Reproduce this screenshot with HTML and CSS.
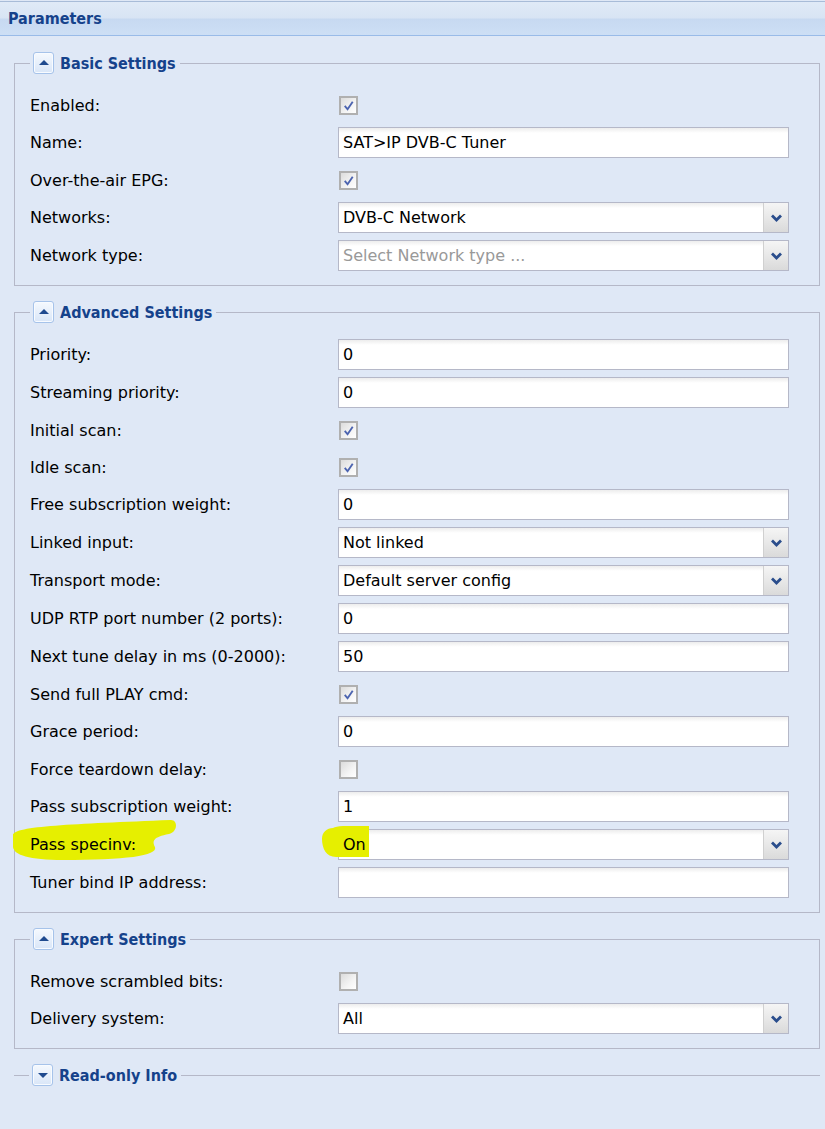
FILE: index.html
```html
<!DOCTYPE html>
<html>
<head>
<meta charset="utf-8">
<title>Parameters</title>
<link rel="stylesheet" href="styles.css">
</head>
<body>
<div class="panel">
  <div class="panel-header"><span class="panel-title">Parameters</span></div>
  <div class="panel-body">

    <fieldset class="group">
      <legend><span class="legend-inner"><span class="tool tool-up"></span><span class="legend-text">Basic Settings</span></span></legend>
      <div class="row check-row"><span class="label">Enabled:</span><span class="checkbox checked"><svg viewBox="0 0 16 16"><path d="M4 8.5 L7 12 L12.5 4"/></svg></span></div>
      <div class="row"><span class="label">Name:</span><span class="field"><span class="value">SAT&gt;IP DVB-C Tuner</span></span></div>
      <div class="row check-row"><span class="label">Over-the-air EPG:</span><span class="checkbox checked"><svg viewBox="0 0 16 16"><path d="M4 8.5 L7 12 L12.5 4"/></svg></span></div>
      <div class="row"><span class="label">Networks:</span><span class="field combo"><span class="value">DVB-C Network</span><span class="trigger"><svg viewBox="0 0 12 8"><path d="M1.5 1.5 L6 6 L10.5 1.5"/></svg></span></span></div>
      <div class="row"><span class="label">Network type:</span><span class="field combo"><span class="value placeholder">Select Network type ...</span><span class="trigger"><svg viewBox="0 0 12 8"><path d="M1.5 1.5 L6 6 L10.5 1.5"/></svg></span></span></div>
    </fieldset>

    <fieldset class="group">
      <legend><span class="legend-inner"><span class="tool tool-up"></span><span class="legend-text">Advanced Settings</span></span></legend>
      <div class="row"><span class="label">Priority:</span><span class="field"><span class="value">0</span></span></div>
      <div class="row"><span class="label">Streaming priority:</span><span class="field"><span class="value">0</span></span></div>
      <div class="row check-row"><span class="label">Initial scan:</span><span class="checkbox checked"><svg viewBox="0 0 16 16"><path d="M4 8.5 L7 12 L12.5 4"/></svg></span></div>
      <div class="row check-row"><span class="label">Idle scan:</span><span class="checkbox checked"><svg viewBox="0 0 16 16"><path d="M4 8.5 L7 12 L12.5 4"/></svg></span></div>
      <div class="row"><span class="label">Free subscription weight:</span><span class="field"><span class="value">0</span></span></div>
      <div class="row"><span class="label">Linked input:</span><span class="field combo"><span class="value">Not linked</span><span class="trigger"><svg viewBox="0 0 12 8"><path d="M1.5 1.5 L6 6 L10.5 1.5"/></svg></span></span></div>
      <div class="row"><span class="label">Transport mode:</span><span class="field combo"><span class="value">Default server config</span><span class="trigger"><svg viewBox="0 0 12 8"><path d="M1.5 1.5 L6 6 L10.5 1.5"/></svg></span></span></div>
      <div class="row"><span class="label">UDP RTP port number (2 ports):</span><span class="field"><span class="value">0</span></span></div>
      <div class="row"><span class="label">Next tune delay in ms (0-2000):</span><span class="field"><span class="value">50</span></span></div>
      <div class="row check-row"><span class="label">Send full PLAY cmd:</span><span class="checkbox checked"><svg viewBox="0 0 16 16"><path d="M4 8.5 L7 12 L12.5 4"/></svg></span></div>
      <div class="row"><span class="label">Grace period:</span><span class="field"><span class="value">0</span></span></div>
      <div class="row check-row"><span class="label">Force teardown delay:</span><span class="checkbox"></span></div>
      <div class="row"><span class="label">Pass subscription weight:</span><span class="field"><span class="value">1</span></span></div>
      <div class="row marked">
        <span class="label">Pass specinv:</span><span class="field combo"><span class="value">On</span><span class="trigger"><svg viewBox="0 0 12 8"><path d="M1.5 1.5 L6 6 L10.5 1.5"/></svg></span></span>
        <svg class="marker" viewBox="0 0 380 44" width="380" height="44"><path d="M0 15 C1 6 60 4 158 0 C165 0 165 12 156 14 C140 17 139 21 142 27 C145 36 112 40 50 40 C16 40 1 35 0 27 Z"/><path d="M320 8 C314 8 309 12 309 19 C309 28 313 37 323 37 L356 37 L356 6 L330 6 C325 6 322 7 320 8 Z"/></svg>
      </div>
      <div class="row"><span class="label">Tuner bind IP address:</span><span class="field"></span></div>
    </fieldset>

    <fieldset class="group">
      <legend><span class="legend-inner"><span class="tool tool-up"></span><span class="legend-text">Expert Settings</span></span></legend>
      <div class="row check-row"><span class="label">Remove scrambled bits:</span><span class="checkbox"></span></div>
      <div class="row"><span class="label">Delivery system:</span><span class="field combo"><span class="value">All</span><span class="trigger"><svg viewBox="0 0 12 8"><path d="M1.5 1.5 L6 6 L10.5 1.5"/></svg></span></span></div>
    </fieldset>

    <fieldset class="group collapsed">
      <legend><span class="legend-inner"><span class="tool tool-down"></span><span class="legend-text">Read-only Info</span></span></legend>
    </fieldset>

  </div>
</div>
</body>
</html>
```
FILE: styles.css
```css
html, body {
  margin: 0;
  padding: 0;
  background: #dfe8f6;
}
body {
  font-family: "DejaVu Sans", "Liberation Sans", sans-serif;
  font-size: 16px;
  color: #000;
}
.panel {
  width: 825px;
  min-height: 1129px;
  background: #dfe8f6;
  padding-top: 1px;
  box-sizing: border-box;
}
.panel-header {
  height: 33px;
  border-top: 1px solid #a8bcd8;
  border-bottom: 1px solid #99bbe8;
  background: linear-gradient(#e0eaf7 0, #d8e4f4 48%, #c7d9f1 52%, #cddff5 100%);
  display: flex;
  align-items: center;
  padding-left: 8px;
}
.panel-title {
  font-family: "DejaVu Sans Condensed", "DejaVu Sans", sans-serif;
  font-weight: bold;
  font-size: 16px;
  color: #15428b;
}
.panel-body {
  padding-top: 1px;
}
.group {
  margin: 15px 5px 0 14px;
  padding: 16px 30px 14px 15px;
  border: 1px solid #b5b8c8;
  min-width: 0;
}
.group legend {
  padding: 0 4px 0 3px;
  height: 22px;
}
.legend-inner {
  display: flex;
  align-items: center;
  height: 22px;
}
.legend-text {
  font-family: "DejaVu Sans Condensed", "DejaVu Sans", sans-serif;
  font-weight: bold;
  font-size: 16px;
  color: #15428b;
  margin-left: 6px;
}
.tool {
  width: 19px;
  height: 20px;
  border: 1px solid #a6c3ea;
  border-radius: 3px;
  background: linear-gradient(#f5f9fe, #d9e6f8);
  display: flex;
  align-items: center;
  justify-content: center;
  box-shadow: inset 0 0 0 1px #f8fbff;
}
.tool::before {
  content: "";
  width: 0;
  height: 0;
  border-left: 5px solid transparent;
  border-right: 5px solid transparent;
}
.tool-up::before {
  border-bottom: 5px solid #1f4a8f;
  margin-top: -1px;
}
.tool-down::before {
  border-top: 5px solid #1f4a8f;
  margin-top: 1px;
}
.collapsed {
  border-width: 1px 0 0 0;
  padding: 0 0 0 15px;
}
.row {
  display: grid;
  grid-template-columns: 308px 1fr;
  align-items: center;
  height: 31px;
  margin-bottom: 7px;
  position: relative;
}
.row:last-child {
  margin-bottom: 0;
}
.check-row {
  height: 30px;
}
.label {
  white-space: nowrap;
  position: relative;
  z-index: 2;
}
.field {
  height: 31px;
  box-sizing: border-box;
  border: 1px solid #b5b8c8;
  background: linear-gradient(#ededed 0, #fff 5px, #fff 100%);
  padding: 0 4px;
  display: flex;
  align-items: center;
  white-space: nowrap;
  overflow: hidden;
}
.value {
  position: relative;
  z-index: 2;
}
.combo {
  padding-right: 0;
}
.combo .value {
  flex: 1;
}
.placeholder {
  color: #999;
}
.trigger {
  width: 25px;
  height: 29px;
  box-sizing: border-box;
  border-left: 1px solid #d0d0d0;
  background: linear-gradient(#f5f5f5 0, #e8e8e8 50%, #dadada 100%);
  display: flex;
  align-items: center;
  justify-content: center;
}
.trigger svg {
  width: 13px;
  height: 8px;
  fill: none;
  stroke: #2a4d8c;
  stroke-width: 2.8;
}
.checkbox {
  width: 19px;
  height: 19px;
  box-sizing: border-box;
  border: 2px solid #b0b0b0;
  background: linear-gradient(135deg, #dcdcdc, #f4f4f4 60%, #ffffff);
  margin-left: 1px;
  display: flex;
  align-items: center;
  justify-content: center;
}
.checkbox svg {
  width: 15px;
  height: 15px;
  fill: none;
  stroke: #4c64b0;
  stroke-width: 2;
}
.marker {
  position: absolute;
  left: -17px;
  top: -9px;
  z-index: 1;
  pointer-events: none;
}
.marker path {
  fill: #e6ef00;
}
```
